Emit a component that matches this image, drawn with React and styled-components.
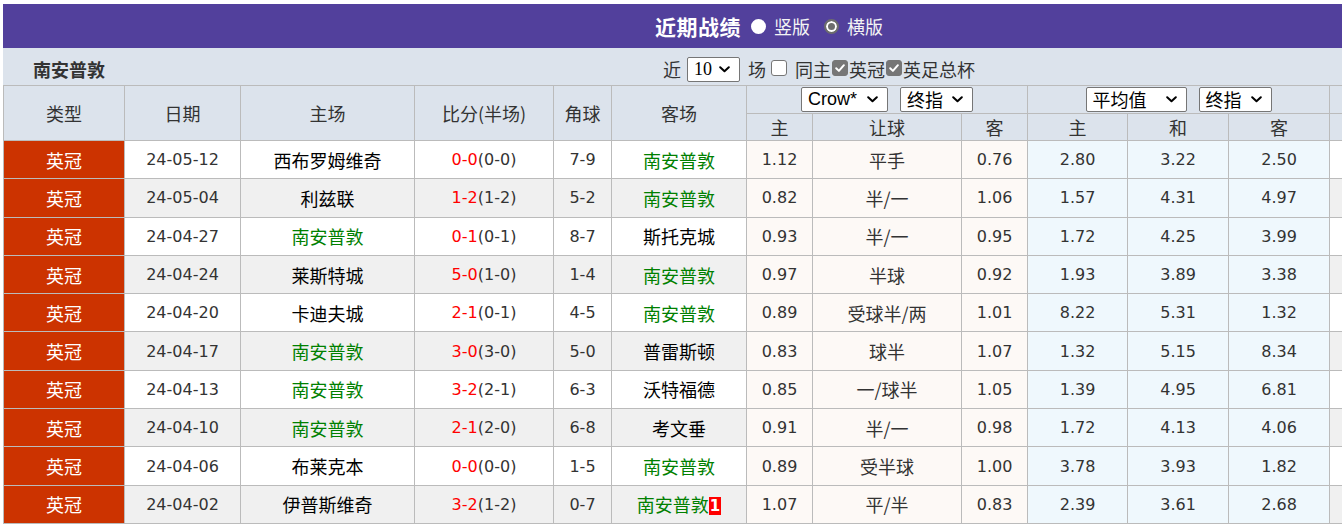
import styled, { createGlobalStyle } from 'styled-components';

const GlobalStyle = createGlobalStyle`
  html, body {
    margin: 0;
    padding: 0;
    background: #ffffff;
    overflow: hidden;
  }
  body {
    font-family: "DejaVu Sans", "Noto Sans CJK SC", sans-serif;
  }
`;

const CJK = '"Noto Sans CJK SC", "DejaVu Sans", sans-serif';
const NUM = '"DejaVu Sans", "Noto Sans CJK SC", sans-serif';

const rows = [
  ['24-05-12', '西布罗姆维奇', '0-0', '(0-0)', '7-9', '南安普敦', '1.12', '平手', '0.76', '2.80', '3.22', '2.50'],
  ['24-05-04', '利兹联', '1-2', '(1-2)', '5-2', '南安普敦', '0.82', '半/一', '1.06', '1.57', '4.31', '4.97'],
  ['24-04-27', '南安普敦', '0-1', '(0-1)', '8-7', '斯托克城', '0.93', '半/一', '0.95', '1.72', '4.25', '3.99'],
  ['24-04-24', '莱斯特城', '5-0', '(1-0)', '1-4', '南安普敦', '0.97', '半球', '0.92', '1.93', '3.89', '3.38'],
  ['24-04-20', '卡迪夫城', '2-1', '(0-1)', '4-5', '南安普敦', '0.89', '受球半/两', '1.01', '8.22', '5.31', '1.32'],
  ['24-04-17', '南安普敦', '3-0', '(3-0)', '5-0', '普雷斯顿', '0.83', '球半', '1.07', '1.32', '5.15', '8.34'],
  ['24-04-13', '南安普敦', '3-2', '(2-1)', '6-3', '沃特福德', '0.85', '一/球半', '1.05', '1.39', '4.95', '6.81'],
  ['24-04-10', '南安普敦', '2-1', '(2-0)', '6-8', '考文垂', '0.91', '半/一', '0.98', '1.72', '4.13', '4.06'],
  ['24-04-06', '布莱克本', '0-0', '(0-0)', '1-5', '南安普敦', '0.89', '受半球', '1.00', '3.78', '3.93', '1.82'],
  ['24-04-02', '伊普斯维奇', '3-2', '(1-2)', '0-7', '南安普敦', '1.07', '平/半', '0.83', '2.39', '3.61', '2.68', '1'],
];

const colWidths = [121, 116, 174, 139, 58, 135, 66, 149, 66, 100, 101, 101, 206];

const TEAM = '南安普敦';

function Check() {
  return (
    <svg width="12" height="12" viewBox="0 0 12 12">
      <path d="M2.2 6.3 L4.9 8.9 L9.9 3.2" fill="none" stroke="#fff" strokeWidth="2" strokeLinecap="round" strokeLinejoin="round" />
    </svg>
  );
}

function Chevron() {
  return (
    <svg width="11" height="7" viewBox="0 0 11 7">
      <path d="M1.2 1.2 L5.5 5.3 L9.8 1.2" fill="none" stroke="#000" strokeWidth="2" strokeLinecap="round" strokeLinejoin="round" />
    </svg>
  );
}

function Dropdown({ value, w, font }) {
  return (
    <SelectBox $w={w} $font={font}>
      <span>{value}</span>
      <Chevron />
    </SelectBox>
  );
}

export default function App() {
  return (
    <Page>
      <GlobalStyle />
      <TitleBar>
        <Title>近期战绩</Title>
        <RadioLabel>
          <Radio />
          竖版
        </RadioLabel>
        <RadioLabel>
          <Radio $checked />
          横版
        </RadioLabel>
      </TitleBar>

      <FilterBar>
        <TeamName>南安普敦</TeamName>
        <Filters>
          <FilterText>近</FilterText>
          <FilterSelect>
            <Dropdown value="10" w={53} font="serif" />
          </FilterSelect>
          <FilterText>场</FilterText>
          <Box />
          <FilterText>同主</FilterText>
          <Box $checked><Check /></Box>
          <FilterText>英冠</FilterText>
          <Box $checked><Check /></Box>
          <FilterText>英足总杯</FilterText>
        </Filters>
      </FilterBar>

      <Table>
        <colgroup>
          {colWidths.map((w, i) => (
            <col key={i} style={{ width: w }} />
          ))}
        </colgroup>
        <thead>
          <HeadRow $h={28}>
            <Th rowSpan={2}>类型</Th>
            <Th rowSpan={2}>日期</Th>
            <Th rowSpan={2}>主场</Th>
            <Th rowSpan={2}>比分(半场)</Th>
            <Th rowSpan={2}>角球</Th>
            <Th rowSpan={2}>客场</Th>
            <Th colSpan={3}>
              <SelectGroup>
                <Dropdown value="Crow*" w={87} font="sans" />
                <Dropdown value="终指" w={73} />
              </SelectGroup>
            </Th>
            <Th colSpan={3}>
              <SelectGroup>
                <Dropdown value="平均值" w={101} />
                <Dropdown value="终指" w={73} />
              </SelectGroup>
            </Th>
            <Th />
          </HeadRow>
          <HeadRow $h={27}>
            <Th>主</Th>
            <Th>让球</Th>
            <Th>客</Th>
            <Th>主</Th>
            <Th>和</Th>
            <Th>客</Th>
            <Th />
          </HeadRow>
        </thead>
        <tbody>
          {rows.map((r, i) => (
            <BodyRow key={r[0]} $alt={i % 2 === 1}>
              <League>英冠</League>
              <Td>{r[0]}</Td>
              <Td $cjk $home={r[1] === TEAM}>{r[1]}</Td>
              <Td>
                <Score>{r[2]}</Score>
                {r[3]}
              </Td>
              <Td>{r[4]}</Td>
              <Td $cjk $home={r[5] === TEAM}>
                {r[5]}
                {r[12] && <RedCard>{r[12]}</RedCard>}
              </Td>
              <Td $odds="warm">{r[6]}</Td>
              <Td $odds="warm" $cjk $dark>{r[7]}</Td>
              <Td $odds="warm">{r[8]}</Td>
              <Td $odds="blue">{r[9]}</Td>
              <Td $odds="blue">{r[10]}</Td>
              <Td $odds="blue">{r[11]}</Td>
              <Td />
            </BodyRow>
          ))}
        </tbody>
      </Table>
    </Page>
  );
}

const Page = styled.div`
  width: 1532px;
  padding: 4px 0 0 3px;
`;

const TitleBar = styled.div`
  height: 44px;
  background: #52409c;
  display: flex;
  align-items: center;
  justify-content: center;
  color: #ffffff;
  font-family: ${CJK};
`;

const Title = styled.span`
  font-size: 21px;
  font-weight: 700;
  margin-right: 10px;
  letter-spacing: 0.5px;
`;

const RadioLabel = styled.label`
  display: flex;
  align-items: center;
  font-size: 18px;
  color: #f4f4f4;
  margin-right: 14px;

  &:last-child {
    margin-right: 0;
  }
`;

const Radio = styled.span`
  box-sizing: border-box;
  width: 15px;
  height: 15px;
  border-radius: 50%;
  margin: 0 8px 0 0;
  background: ${(p) => (p.$checked ? '#6d6d6d' : '#ffffff')};
  border: 2px solid ${(p) => (p.$checked ? '#6d6d6d' : '#ffffff')};
  box-shadow: ${(p) => (p.$checked ? 'inset 0 0 0 2px #ffffff' : 'none')};
`;

const FilterBar = styled.div`
  height: 37px;
  box-sizing: border-box;
  background: #dce3ec;
  display: flex;
  align-items: flex-end;
  padding: 0 0 3px 30px;
  font-family: ${CJK};
`;

const TeamName = styled.div`
  font-size: 18px;
  font-weight: 700;
  color: #333333;
  width: 75px;
  line-height: 26px;
`;

const Filters = styled.div`
  display: flex;
  align-items: center;
  margin-left: 555px;
  font-size: 18px;
  color: #333333;
  height: 26px;
`;

const FilterText = styled.span`
  line-height: 24px;
`;

const FilterSelect = styled.span`
  display: flex;
  margin: 0 8px 0 6px;
`;

const Box = styled.span`
  box-sizing: border-box;
  width: 16px;
  height: 16px;
  border-radius: 3px;
  margin: 0 ${(p) => (p.$checked ? '1px' : '8px')} 3px ${(p) => (p.$checked ? '1px' : '5px')};
  display: flex;
  align-items: center;
  justify-content: center;
  background: ${(p) => (p.$checked ? '#767676' : '#ffffff')};
  border: 1px solid #767676;
`;

const SelectBox = styled.div`
  box-sizing: border-box;
  width: ${(p) => p.$w}px;
  height: 25px;
  display: flex;
  align-items: center;
  justify-content: space-between;
  padding: 0 9px 0 6px;
  border: 1px solid #767676;
  border-radius: 2px;
  background: #ffffff;
  color: #000000;
  font-size: 18px;
  line-height: 23px;
  font-weight: 400;
  font-family: ${(p) =>
    p.$font === 'serif'
      ? '"Liberation Serif", serif'
      : p.$font === 'sans'
      ? '"Liberation Sans", sans-serif'
      : CJK};

  & svg {
    flex: none;
  }
`;

const SelectGroup = styled.div`
  display: flex;
  justify-content: center;
  align-items: center;
  gap: 12px;
`;

const Table = styled.table`
  border-collapse: collapse;
  table-layout: fixed;
  width: 1532px;
`;

const HeadRow = styled.tr`
  height: ${(p) => p.$h}px;
`;

const Th = styled.th`
  background: #dce3ec;
  border: 1px solid #bbbbbb;
  font-family: ${CJK};
  font-size: 18px;
  font-weight: 400;
  color: #333333;
  padding: 0;
  text-align: center;
  vertical-align: middle;
  line-height: 24px;
`;

const BodyRow = styled.tr`
  height: 38.3px;
  background: ${(p) => (p.$alt ? '#f0f0f0' : '#ffffff')};
`;

const Td = styled.td`
  border: 1px solid #bbbbbb;
  padding: 0;
  text-align: center;
  vertical-align: middle;
  white-space: nowrap;
  font-family: ${(p) => (p.$cjk ? CJK : NUM)};
  font-size: ${(p) => (p.$cjk ? '18px' : '16px')};
  color: ${(p) => (p.$home ? '#008000' : p.$cjk && !p.$dark ? '#000000' : '#333333')};
  background: ${(p) =>
    p.$odds === 'warm' ? '#fdf9f6' : p.$odds === 'blue' ? '#eff8fd' : 'transparent'};
`;

const League = styled.td`
  border: 1px solid #bbbbbb;
  padding: 0;
  background: #cc3300;
  color: #ffffff;
  text-align: center;
  font-family: ${CJK};
  font-size: 18px;
`;

const Score = styled.span`
  color: #ff0000;
`;

const RedCard = styled.span`
  display: inline-block;
  background: #ff0000;
  color: #ffffff;
  font-family: ${NUM};
  font-weight: 700;
  font-size: 15px;
  line-height: 18px;
  padding: 0 1px;
  vertical-align: 1px;
`;
